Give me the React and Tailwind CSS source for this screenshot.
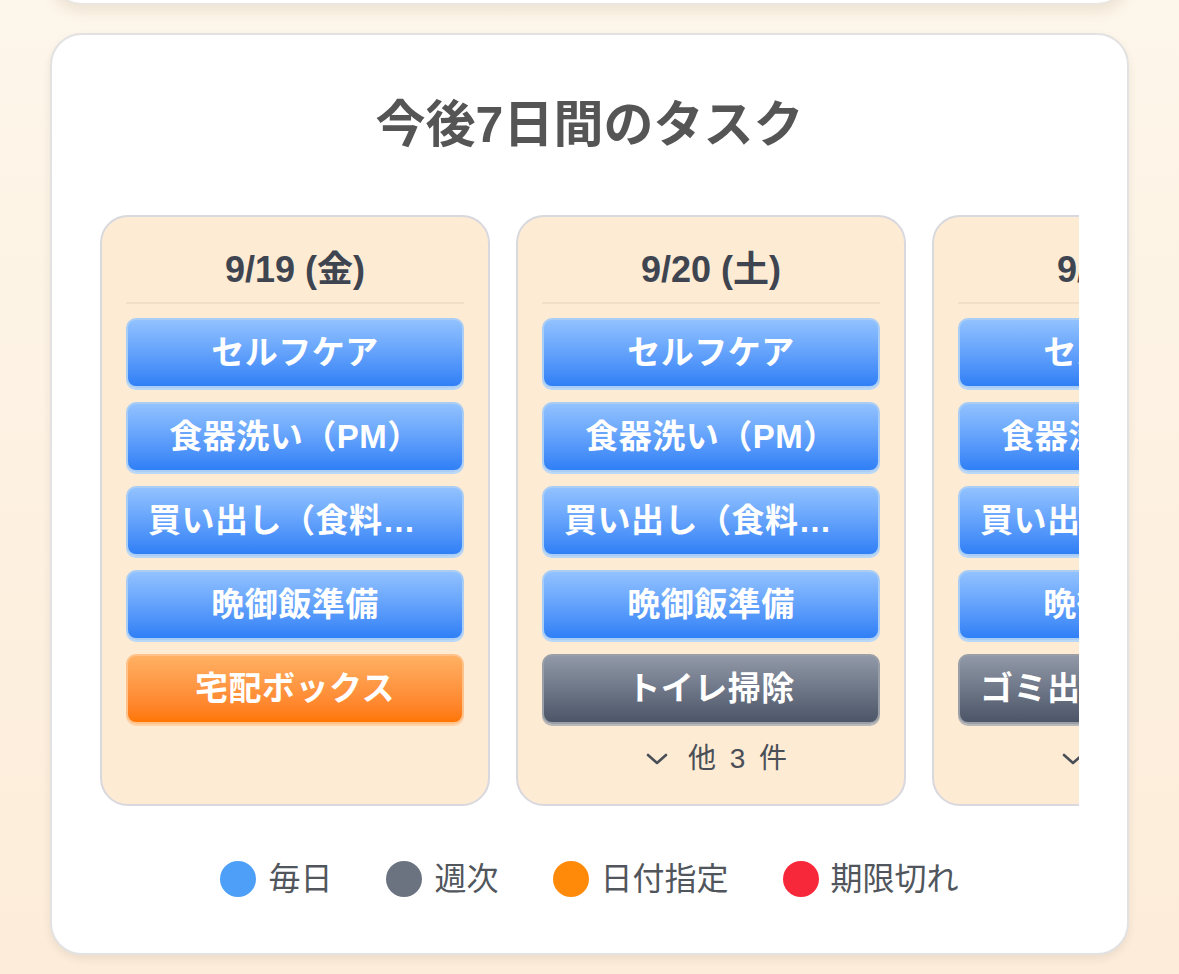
import React from "react";

const FONT = { fontFamily: '"Liberation Sans", "Noto Sans CJK JP", sans-serif' };

const STYLES = {
  daily:
    "bg-gradient-to-b from-[#92c2ff] to-[#2f7ff6] border-[#a9cdf5] shadow-[0_2px_0_#b9d7f7]",
  weekly:
    "bg-gradient-to-b from-[#9199a8] to-[#4d5668] border-[#9a9ea6] shadow-[0_2px_0_#b8b8b8]",
  date:
    "bg-gradient-to-b from-[#ffb062] to-[#ff7600] border-[#ffc18a] shadow-[0_2px_0_#ffd2a8]",
};

const days = [
  {
    label: "9/19 (金)",
    tasks: [
      ["セルフケア", "daily"],
      ["食器洗い（PM）", "daily"],
      ["買い出し（食料品）", "daily"],
      ["晩御飯準備", "daily"],
      ["宅配ボックス", "date"],
    ],
    more: 0,
  },
  {
    label: "9/20 (土)",
    tasks: [
      ["セルフケア", "daily"],
      ["食器洗い（PM）", "daily"],
      ["買い出し（食料品）", "daily"],
      ["晩御飯準備", "daily"],
      ["トイレ掃除", "weekly"],
    ],
    more: 3,
  },
  {
    label: "9/21 (日)",
    tasks: [
      ["セルフケア", "daily"],
      ["食器洗い（PM）", "daily"],
      ["買い出し（食料品）", "daily"],
      ["晩御飯準備", "daily"],
      ["ゴミ出し（燃えるゴミ）", "weekly"],
    ],
    more: 2,
  },
];

function Chevron() {
  return (
    <svg width="22" height="14" viewBox="0 0 22 14" fill="none">
      <path d="M2 3 L11 11 L20 3" stroke="#4a4f57" strokeWidth="2.6" strokeLinecap="round" strokeLinejoin="round" />
    </svg>
  );
}

function DayColumn({ day }) {
  return (
    <div className="w-[390px] shrink-0 rounded-[28px] border-2 border-[#d8d8de] bg-[#fdebd4] px-6 pt-6 pb-6 flex flex-col">
      <div className="h-[58px] flex items-center justify-center text-[36px] font-bold text-[#3f4550] leading-none">
        {day.label}
      </div>
      <div className="h-[2px] bg-[#f3dfc8] mt-[3px] mb-[14px]" />
      <div className="flex flex-col gap-[14px]">
        {day.tasks.map(([name, kind], i) => (
          <div
            key={i}
            className={`h-[70px] rounded-[10px] border-2 px-5 flex items-center justify-center ${STYLES[kind]}`}
          >
            <span className="block w-full truncate text-center text-[33px] font-bold text-white leading-[44px] tracking-[0.5px]">
              {name}
            </span>
          </div>
        ))}
      </div>
      {day.more > 0 && (
        <div className="h-[42px] mt-[14px] flex items-center justify-center gap-[20px] text-[28px] text-[#4a4f57] pl-[14px]">
          <Chevron />
          <span className="tracking-[3px]">他 {day.more} 件</span>
        </div>
      )}
    </div>
  );
}

function Legend() {
  const items = [
    ["毎日", "bg-[#4d9ff8]"],
    ["週次", "bg-[#6b7381]"],
    ["日付指定", "bg-[#ff8a0a]"],
    ["期限切れ", "bg-[#f7283a]"],
  ];
  return (
    <div className="flex items-center justify-center gap-[54px]">
      {items.map(([t, c]) => (
        <div key={t} className="flex items-center gap-[12px]">
          <span className={`w-[36px] h-[36px] rounded-full ${c}`} />
          <span className="text-[32px] text-[#51565d] leading-[44px]">{t}</span>
        </div>
      ))}
    </div>
  );
}

export default function App() {
  return (
    <div
      style={FONT}
      className="w-[1179px] h-[974px] overflow-hidden bg-gradient-to-b from-[#fdf6ea] to-[#fdecd9] px-[50px]"
    >
      <div className="h-[100px] -mt-[95px] rounded-[32px] bg-white border-2 border-[#ebe6df] shadow-[0_6px_14px_rgba(120,90,50,0.12)]" />
      <div className="mt-[28px] rounded-[32px] border-2 border-[#e2e2e2] bg-white shadow-[0_4px_10px_rgba(0,0,0,0.07)] pt-[60px] pb-[52px]">
        <h1 className="text-center text-[50px] font-bold text-[#555555] leading-[60px]">
          今後7日間のタスク
        </h1>
        <div className="mx-[48px] mt-[60px] overflow-hidden">
          <div className="flex gap-[26px] items-stretch">
            {days.map((d) => (
              <DayColumn key={d.label} day={d} />
            ))}
          </div>
        </div>
        <div className="mt-[51px]">
          <Legend />
        </div>
      </div>
    </div>
  );
}
